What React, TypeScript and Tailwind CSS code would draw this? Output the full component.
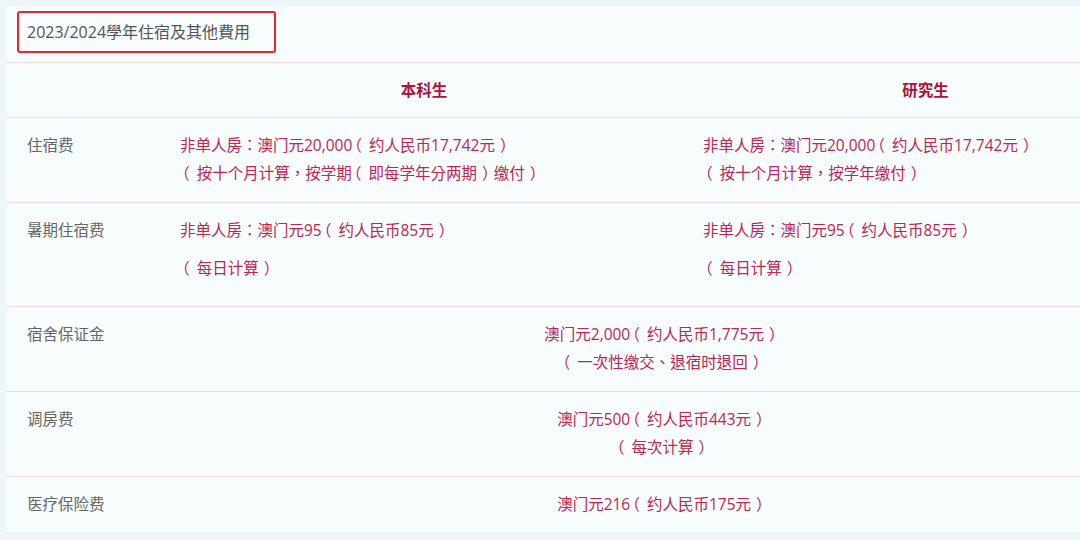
const font = { fontFamily: '"Open Sans", "Noto Sans CJK TC", sans-serif' };

type Row = {
  label: string;
  a?: string[];
  b?: string[];
  merged?: string[];
  spaced?: boolean;
};

const rows: Row[] = [
  {
    label: "住宿费",
    a: ["非单人房：澳门元20,000（约人民币17,742元）", "（按十个月计算，按学期（即每学年分两期）缴付）"],
    b: ["非单人房：澳门元20,000（约人民币17,742元）", "（按十个月计算，按学年缴付）"],
  },
  {
    label: "暑期住宿费",
    a: ["非单人房：澳门元95（约人民币85元）", "（每日计算）"],
    b: ["非单人房：澳门元95（约人民币85元）", "（每日计算）"],
    spaced: true,
  },
  { label: "宿舍保证金", merged: ["澳门元2,000（约人民币1,775元）", "（一次性缴交、退宿时退回）"] },
  { label: "调房费", merged: ["澳门元500（约人民币443元）", "（每次计算）"] },
  { label: "医疗保险费", merged: ["澳门元216（约人民币175元）"] },
];

// brackets: half-width glyph box, then padded so the ink sits like the source font
function Text({ s }: { s: string }) {
  return (
    <>
      {s.split(/([（）])/).map((part, i) =>
        part === "（" ? (
          <span key={i} className="pl-[2px] pr-[7px] [font-feature-settings:'halt']">
            {part}
          </span>
        ) : part === "）" ? (
          <span key={i} className="pl-[5px] pr-[4px] [font-feature-settings:'halt']">
            {part}
          </span>
        ) : (
          part
        )
      )}
    </>
  );
}

function Lines({ lines, spaced }: { lines: string[]; spaced?: boolean }) {
  return (
    <>
      {lines.map((l, i) => (
        <p key={i} className={spaced ? "mb-[10px]" : ""}>
          <Text s={l} />
        </p>
      ))}
    </>
  );
}

export default function App() {
  return (
    <div className="w-[1080px] h-[540px] overflow-hidden bg-[#eef6fa] pt-[6px] pl-[6px]" style={font}>
      <div className="w-[1162px] h-[526px] bg-[#f7fcfd]">
        <div className="h-[56px] pt-[5px] pl-[11px]">
          <div className="inline-flex items-center h-[42px] w-[259px] border-2 border-[#e8262b] rounded-[3px] pl-[8px] text-[16px] text-[#555]">
            2023/2024學年住宿及其他費用
          </div>
        </div>
        <div className="grid grid-cols-[159px_518px_485px] text-[15.5px] leading-[28px]">
          <div className="col-span-3 grid grid-cols-subgrid border-t border-b border-[#f0d8e1] py-[13px] font-bold text-[#b0103c]">
            <div />
            <div className="text-center">本科生</div>
            <div className="text-center">研究生</div>
          </div>
          {rows.map((r) => (
            <div
              key={r.label}
              className={`col-span-3 grid grid-cols-subgrid pt-[13px] ${r.spaced ? "pb-[14px]" : "pb-[15px]"} ${r.label === "医疗保险费" ? "" : "border-b border-[#f0d8e1]"}`}
            >
              <div className="pl-[21px] text-[#666]">{r.label}</div>
              {r.merged ? (
                <div className="col-span-2 pr-[8px] text-center text-[#be2552]">
                  <Lines lines={r.merged} />
                </div>
              ) : (
                <>
                  <div className="pl-[15px] text-[#be2552]">
                    <Lines lines={r.a!} spaced={r.spaced} />
                  </div>
                  <div className="pl-[20px] text-[#be2552]">
                    <Lines lines={r.b!} spaced={r.spaced} />
                  </div>
                </>
              )}
            </div>
          ))}
        </div>
      </div>
    </div>
  );
}
